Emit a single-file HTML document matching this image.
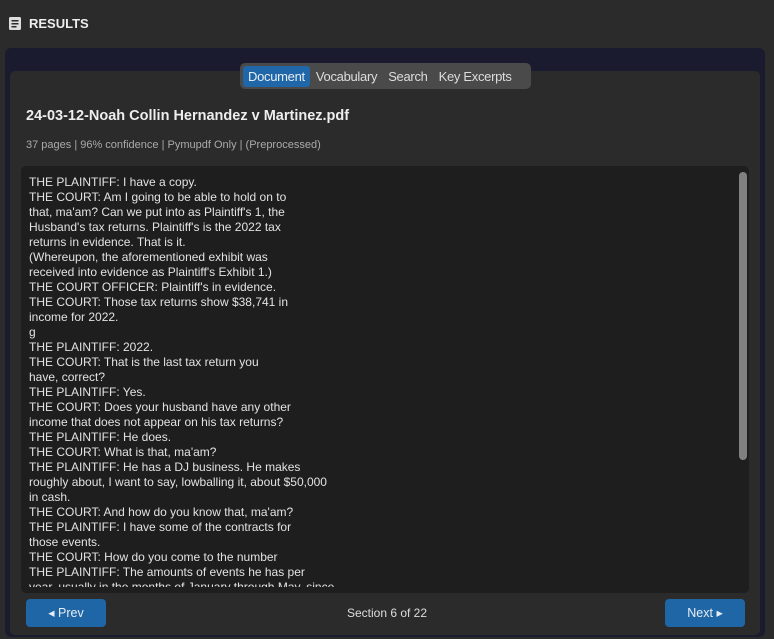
<!DOCTYPE html>
<html><head><meta charset="utf-8"><style>
*{margin:0;padding:0;box-sizing:border-box}
body{width:774px;height:639px;background:#2b2b2b;font-family:"Liberation Sans",sans-serif;overflow:hidden;position:relative}
.hdr{position:absolute;left:8px;top:16px;color:#eee;font-weight:bold;font-size:13px;display:flex;align-items:center;gap:7px}
.outer{position:absolute;left:5px;top:48px;width:760px;height:589px;background:#1b1b2f;border-radius:6px}
.card{position:absolute;left:10px;top:71px;width:750px;height:564px;background:#2b2b2b;border-radius:5px}
.tabs{position:absolute;left:240px;top:63px;width:291px;height:26px;background:#4a4a4a;border-radius:5px;display:flex;align-items:center;padding:0 3px;gap:1px}
.tab{color:#ddd;font-size:13px;padding:3px 5px;border-radius:3px;letter-spacing:-0.3px}
.tab.on{background:#1f67a8;color:#e8eef5}
.title{position:absolute;left:26px;top:108px;color:#eee;font-weight:bold;font-size:14.5px}
.meta{position:absolute;left:26px;top:139px;color:#aaa;font-size:11px}
.txt{position:absolute;left:21px;top:166px;width:728px;height:427px;background:#1e1e1e;border-radius:5px;overflow:hidden}
.clip{position:absolute;left:0;top:0;width:710px;height:421px;overflow:hidden}
.lines{position:absolute;left:8px;top:9px;color:#e2e2e2;font-size:12px;line-height:15px;letter-spacing:0px;white-space:pre}
.sb{position:absolute;left:718px;top:6px;width:8px;height:288px;background:#808080;border-radius:4px}
.btn{position:absolute;top:599px;width:80px;height:28px;background:#1f66a6;border-radius:4px;color:#e6edf5;font-size:12.5px;text-align:center;line-height:28px}
.sec{position:absolute;left:0;width:774px;top:606px;text-align:center;color:#ddd;font-size:12px}
</style></head><body>
<div class="hdr"><svg width="14" height="15" viewBox="0 0 14 15"><rect x="1" y="1" width="12" height="13" rx="1.5" fill="#ddd"/><rect x="3.5" y="4" width="7" height="1.5" fill="#2b2b2b"/><rect x="3.5" y="7" width="7" height="1.5" fill="#2b2b2b"/><rect x="3.5" y="10" width="5" height="1.5" fill="#2b2b2b"/></svg>RESULTS</div>
<div class="outer"></div>
<div class="card"></div>
<div class="tabs"><span class="tab on">Document</span><span class="tab">Vocabulary</span><span class="tab">Search</span><span class="tab">Key Excerpts</span></div>
<div class="title">24-03-12-Noah Collin Hernandez v Martinez.pdf</div>
<div class="meta">37 pages | 96% confidence | Pymupdf Only | (Preprocessed)</div>
<div class="txt"><div class="clip"><div class="lines">THE PLAINTIFF: I have a copy.
THE COURT: Am I going to be able to hold on to
that, ma'am? Can we put into as Plaintiff's 1, the
Husband's tax returns. Plaintiff's is the 2022 tax
returns in evidence. That is it.
(Whereupon, the aforementioned exhibit was
received into evidence as Plaintiff's Exhibit 1.)
THE COURT OFFICER: Plaintiff's in evidence.
THE COURT: Those tax returns show $38,741 in
income for 2022.
g
THE PLAINTIFF: 2022.
THE COURT: That is the last tax return you
have, correct?
THE PLAINTIFF: Yes.
THE COURT: Does your husband have any other
income that does not appear on his tax returns?
THE PLAINTIFF: He does.
THE COURT: What is that, ma'am?
THE PLAINTIFF: He has a DJ business. He makes
roughly about, I want to say, lowballing it, about $50,000
in cash.
THE COURT: And how do you know that, ma'am?
THE PLAINTIFF: I have some of the contracts for
those events.
THE COURT: How do you come to the number
THE PLAINTIFF: The amounts of events he has per
year, usually in the months of January through May, since</div></div><div class="sb"></div></div>
<div class="btn" style="left:26px">◂ Prev</div>
<div class="sec">Section 6 of 22</div>
<div class="btn" style="left:665px">Next ▸</div>
</body></html>
